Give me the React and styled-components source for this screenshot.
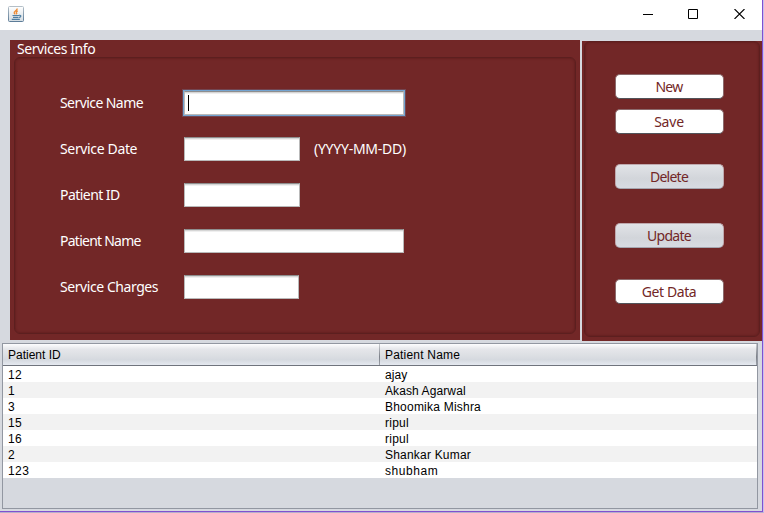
import React from "react";
import styled, { createGlobalStyle, css } from "styled-components";

const Global = createGlobalStyle`
  * { box-sizing: border-box; }
  html, body { margin: 0; overflow: hidden; }
`;

const Window = styled.div`
  width: 764px;
  height: 513px;
  display: flex;
  flex-direction: column;
  background: #d6d9df;
  border-right: 1px solid #c9bfee;
  border-bottom: 1px solid #b6aecb;
  font-family: "Noto Sans", sans-serif;
  font-size: 14px;
`;

const Frame = styled.div`
  flex: 1;
  display: flex;
  flex-direction: column;
  border-right: 1px solid #8050d0;
  border-bottom: 1px solid #8050d0;
`;

const TitleBar = styled.header`
  height: 30px;
  flex: none;
  display: flex;
  justify-content: space-between;
  padding: 6px 17px 0 8px;
  background: #fff;
`;

const WindowControls = styled.div`
  display: flex;
  gap: 35px;
  padding-top: 3px;
  svg { display: block; }
  svg:last-child { margin-left: 1px; }
`;

const Panels = styled.main`
  height: 313px;
  flex: none;
  display: flex;
  align-items: flex-start;
  padding: 10px 0 0 10px;
`;

const panelBase = css`
  height: 300px;
  background: #722727;
`;

const InfoPanel = styled.section`
  ${panelBase}
  width: 570px;
  padding: 0 4px 6px;
  display: flex;
  flex-direction: column;
`;

const ActionPanel = styled.aside`
  ${panelBase}
  width: 180px;
  margin: 1px 0 0 2px;
  padding: 0 2px 4px;
  display: flex;
`;

const Label = styled.span`
  color: #fff;
  line-height: 18px;
  white-space: nowrap;
  letter-spacing: ${(p) => p.$track || 0}px;
`;

const Legend = styled.div`
  height: 17px;
  flex: none;
  padding-left: 3px;
  display: flex;
`;

const Inset = styled.div`
  flex: 1;
  border: 1px solid #5c1f1f;
  border-radius: 6px;
  box-shadow: inset 0 0 2px 1px rgba(70, 15, 15, 0.28);
  display: flex;
  flex-direction: column;
`;

const Form = styled(Inset)`
  padding: 33px 0 0 45px;
`;

const FieldRow = styled.div`
  height: 46px;
  flex: none;
  display: flex;
  align-items: flex-start;
`;

const LabelCell = styled.label`
  width: 124px;
  padding-top: 3px;
  display: flex;
`;

const fieldLook = css`
  height: 24px;
  border: 1px solid #b9b9b9;
  border-top-color: #8e8e8e;
  background: linear-gradient(#d6d6d6 0, #d6d6d6 1px, #efefef 1px, #efefef 2px, #fff 2px);
`;

const Field = styled.input`
  ${fieldLook}
  display: block;
  width: ${(p) => p.$width}px;
  padding: 0 4px;
  outline: none;
  font: inherit;
`;

const FocusedField = styled.div`
  ${fieldLook}
  width: 220px;
  display: flex;
  padding: 3px 0 0 3px;
  box-shadow: 0 0 0 1px #73a4d1, 0 0 0 2px rgba(115, 164, 209, 0.25);
`;

const Caret = styled.i`
  width: 1px;
  height: 16px;
  background: #000;
`;

const Hint = styled.div`
  padding: 3px 0 0 14px;
  display: flex;
`;

const Actions = styled(Inset)`
  padding: 32px 0 0 30px;
`;

const ActionButton = styled.button`
  width: 109px;
  height: 25px;
  flex: none;
  margin: 0 0 ${(p) => p.$after}px;
  padding: 0 1px 0 0;
  border: 1px solid ${(p) => (p.$muted ? "#bfa9ae" : "#8b6a6c")};
  border-bottom-color: ${(p) => (p.$muted ? "#a5a6af" : "#515359")};
  border-radius: 5px;
  background: ${(p) =>
    p.$muted ? "linear-gradient(#e1e3e7, #d2d5da 60%, #d8dbe2)" : "#fff"};
  color: #722727;
  font: inherit;
  line-height: 21px;
  letter-spacing: ${(p) => p.$track || 0}px;
`;

const TableBox = styled.div`
  width: 756px;
  height: 166px;
  margin-left: 2px;
  border: 1px solid #9297a1;
  font-family: "Liberation Sans", Arial, sans-serif;
  font-size: 12px;
  color: #000;
`;

const columns = css`
  display: grid;
  grid-template-columns: 377px 377px;
`;

const HeaderRow = styled.div`
  ${columns}
  height: 22px;
  border-bottom: 1px solid #70747d;
  background: linear-gradient(#fdfdfe 0, #e5e6ea 25%, #dcdfe3 55%, #d5d9df 75%, #e5e9f0 100%);
`;

const HeaderCell = styled.div`
  padding-left: 5px;
  line-height: 23px;
  height: 21px;
  letter-spacing: ${(p) => p.$track || 0}px;
  border-right: 1px solid;
  border-image: linear-gradient(#d0d2d6, #7c8088 60%, #a0a4ac) 1;
  border-top-width: 0;
  border-bottom-width: 0;
`;

const Row = styled.div`
  ${columns}
  height: 16px;
  line-height: 18px;
  background: #fff;
  &:nth-child(odd) { background: #f2f2f2; }
`;

const Cell = styled.div`
  padding-left: 5px;
  letter-spacing: ${(p) => p.$track || 0}px;
`;

const JavaIcon = () => (
  <svg width="16" height="16" viewBox="0 0 16 16">
    <defs>
      <linearGradient id="tile" x1="0" y1="0" x2="0" y2="1">
        <stop offset="0" stopColor="#fff" />
        <stop offset="1" stopColor="#d4dce2" />
      </linearGradient>
      <linearGradient id="edge" x1="0" y1="0" x2="0" y2="1">
        <stop offset="0" stopColor="#b4bfc8" />
        <stop offset="1" stopColor="#5d7c98" />
      </linearGradient>
    </defs>
    <rect x=".5" y=".5" width="15" height="15" rx="1" fill="url(#tile)" stroke="url(#edge)" />
    <path d="M9.2 2.5C9.5 4.4 5.8 5 6.2 6.8c.1.7.7 1 1.1 1.5M9.8 4.8C7.8 5.6 8 6.4 8.6 7c.4.5.1.9-.3 1.3" fill="none" stroke="#ed8b35" strokeWidth="1.3" />
    <path d="M4.5 9.5h6.5M5 11.3h5.3M3.8 13.3h8M11 9.3c2.6-.4 2.4 1.8-.2 2.2" fill="none" stroke="#4f7fa3" strokeWidth="1.2" />
  </svg>
);

const patients = [
  { id: "12", name: "ajay", track: 0.1 },
  { id: "1", name: "Akash Agarwal", track: 0.1 },
  { id: "3", name: "Bhoomika Mishra", track: 0.22 },
  { id: "15", name: "ripul", track: 0.25 },
  { id: "16", name: "ripul", track: 0.25 },
  { id: "2", name: "Shankar Kumar", track: 0.2 },
  { id: "123", name: "shubham", track: 0.55 },
];

const fields = [
  { label: "Service Name", track: -0.57, focused: true },
  { label: "Service Date", track: -0.35, width: 116, hint: "(YYYY-MM-DD)" },
  { label: "Patient ID", track: -0.55, width: 116 },
  { label: "Patient Name", track: -0.75, width: 220 },
  { label: "Service Charges", track: -0.43, width: 115 },
];

const actions = [
  { label: "New", track: -0.7, after: 10 },
  { label: "Save", track: -0.2, after: 30 },
  { label: "Delete", track: -0.75, after: 34, muted: true },
  { label: "Update", track: -0.75, after: 31, muted: true },
  { label: "Get Data", track: -0.4, after: 0 },
];

export default function App() {
  return (
    <Window>
      <Global />
      <Frame>
        <TitleBar>
          <JavaIcon />
          <WindowControls>
            <svg width="10" height="11" viewBox="0 0 10 11"><path d="M0 5.5h10" stroke="#000" /></svg>
            <svg width="10" height="10" viewBox="0 0 10 10"><path d="M.5.5h9v9h-9z" fill="none" stroke="#000" /></svg>
            <svg width="11" height="10" viewBox="0 0 11 10"><path d="M.5 0l10 10M10.5 0l-10 10" stroke="#000" strokeWidth="1.1" /></svg>
          </WindowControls>
        </TitleBar>
        <Panels>
          <InfoPanel>
            <Legend><Label $track={-0.42}>Services Info</Label></Legend>
            <Form>
              {fields.map((f) => (
                <FieldRow key={f.label}>
                  <LabelCell><Label $track={f.track}>{f.label}</Label></LabelCell>
                  {f.focused ? <FocusedField><Caret /></FocusedField> : <Field $width={f.width} />}
                  {f.hint && <Hint><Label $track={-0.25}>{f.hint}</Label></Hint>}
                </FieldRow>
              ))}
            </Form>
          </InfoPanel>
          <ActionPanel>
            <Actions>
              {actions.map((a) => (
                <ActionButton key={a.label} $after={a.after} $muted={a.muted} $track={a.track}>
                  {a.label}
                </ActionButton>
              ))}
            </Actions>
          </ActionPanel>
        </Panels>
        <TableBox>
          <HeaderRow>
            <HeaderCell>Patient ID</HeaderCell>
            <HeaderCell $track={0.2}>Patient Name</HeaderCell>
          </HeaderRow>
          {patients.map((p) => (
            <Row key={p.id}>
              <Cell $track={0.4}>{p.id}</Cell>
              <Cell $track={p.track}>{p.name}</Cell>
            </Row>
          ))}
        </TableBox>
      </Frame>
    </Window>
  );
}
